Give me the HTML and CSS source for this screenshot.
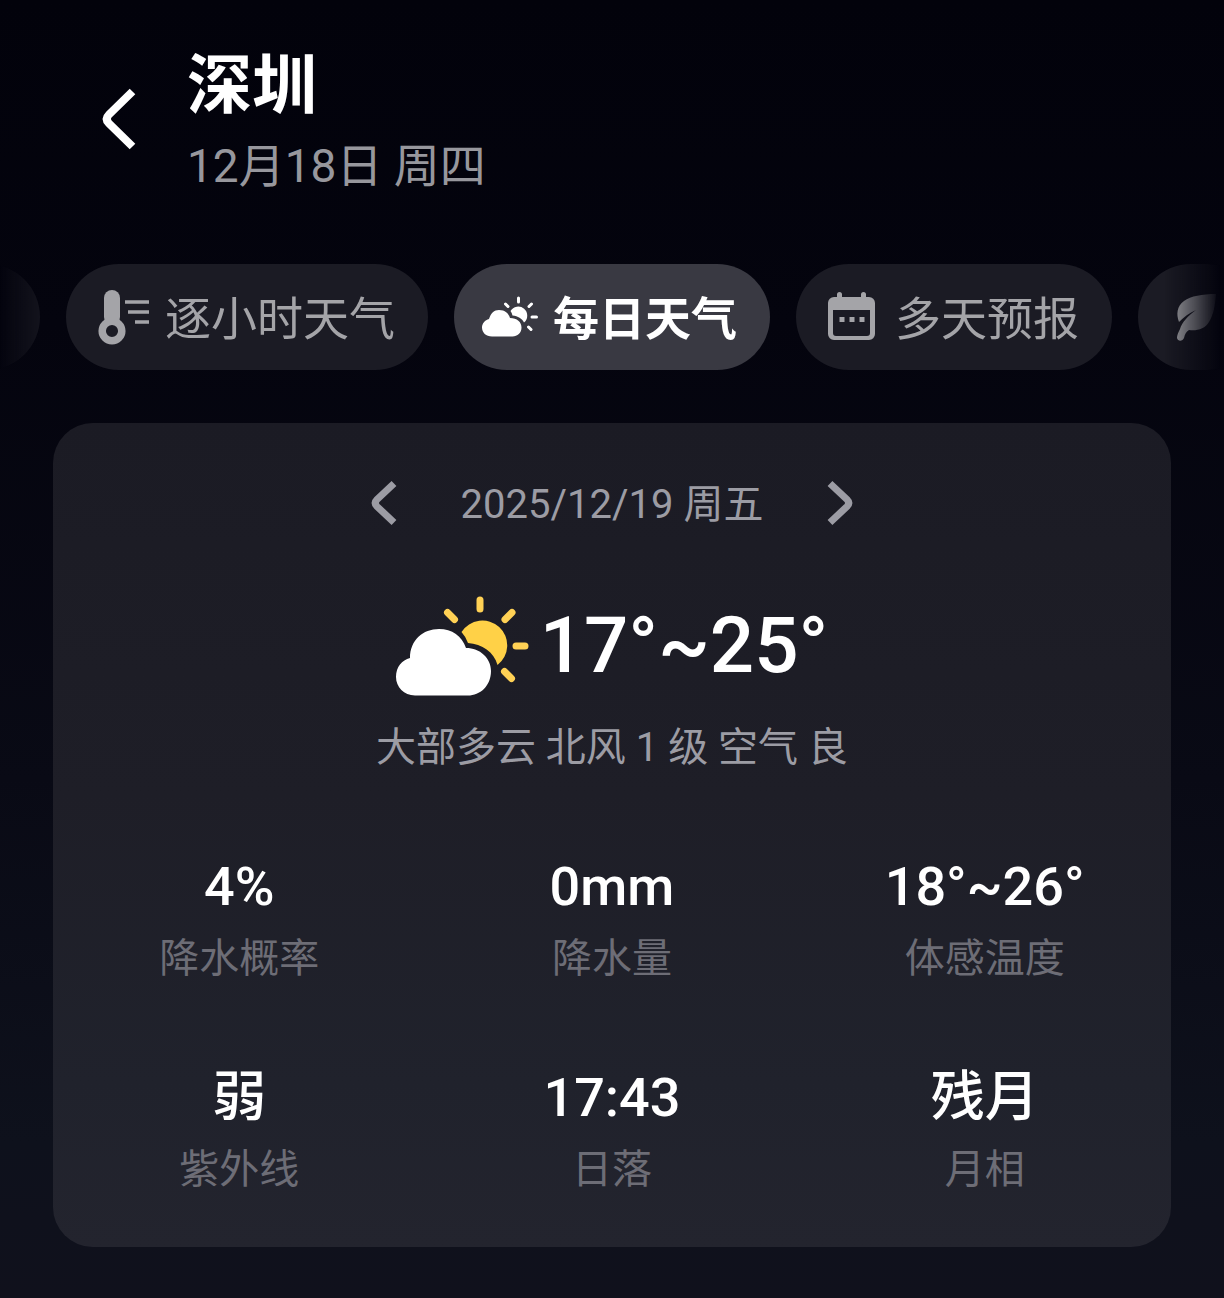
FILE: index.html
```html
<!DOCTYPE html>
<html lang="zh-CN">

<head>
    <meta charset="UTF-8">
    <meta name="viewport" content="width=device-width, initial-scale=1.0">
    <title>深圳 每日天气</title>
    <link rel="stylesheet" href="styles.css">
</head>

<body>
    <!-- Header -->
    <header class="header">
        <button class="back" type="button" aria-label="返回">
            <svg width="34" height="62" viewBox="0 0 34 62"><path class="chevron" d="M30.500 3.500 L7 26.500 Q2.500 31 7 35.500 L30.500 58.500" stroke-width="8"/></svg>
        </button>
        <div>
            <h1 class="city">深圳</h1>
            <p class="today">12月18日 周四</p>
        </div>
    </header>

    <!-- Tabs -->
    <nav class="tabs">
        <button class="tab tab-first" type="button" aria-label="上一项"></button>
        <button class="tab" type="button">
            <svg class="tab-icon" viewBox="0 0 64 64">
                <path stroke="currentColor" stroke-width="16" stroke-linecap="round" d="M21 13v19"/>
                <circle stroke="currentColor" stroke-width="7.500" cx="21" cy="46" r="9.800"/>
                <path stroke="currentColor" stroke-width="3.500" d="M34 17h24M37 27h21M44 37h14"/>
            </svg>
            逐小时天气
        </button>
        <button class="tab active" type="button">
            <svg class="tab-icon" viewBox="0 0 64 64">
                <path fill="currentColor" d="M13 51.500C7 51.500 3 47.500 3 42.500c0-4 3-7.500 7-8.500C12 28 15 25 20 25c6 0 9.500 3 11 8 7 0 11.500 4 11.500 9.500s-4 9-9 9z"/>
                <path fill="currentColor" d="M31.500 26A9 9 0 1 1 45 37.500C43 33.500 39 31 33.500 30.500Q33 28 31.500 26z"/>
                <path stroke="currentColor" stroke-width="3" stroke-linecap="round" d="M39.500 13v4M26.500 19l2.500 2.500M52.500 19l-2.500 2.500M53 32h4.500M49.500 42l2.500 2.500"/>
            </svg>
            每日天气
        </button>
        <button class="tab" type="button">
            <svg class="tab-icon" viewBox="0 0 64 64">
                <path fill="currentColor" fill-rule="evenodd" d="M16 9.500a2.500 2.500 0 0 1 5 0V12h19V9.500a2.500 2.500 0 0 1 5 0V12h3a6 6 0 0 1 6 6v31a6 6 0 0 1-6 6H13a6 6 0 0 1-6-6V18a6 6 0 0 1 6-6h3zM12 25v23a3 3 0 0 0 3 3h31a3 3 0 0 0 3-3V25z"/>
                <path stroke="currentColor" stroke-width="5" d="M18.500 34.500h5M28.500 34.500h5M38.500 34.500h5"/>
            </svg>
            多天预报
        </button>
        <button class="tab" type="button" aria-label="空气质量">
            <svg class="tab-icon" viewBox="0 0 64 64">
                <path fill="currentColor" d="M53 9C39 9 28 11 21 16c-7 5-8 13-5 21 5-5 10-9 17-12-8 6-14 12-16 19-2 4-3 6-3 9 1 4 6 3 7 0 1-4 2-6 5-8 8 1 16-1 20-8 5-8 6-17 7-28z"/>
            </svg>
        </button>
    </nav>

    <!-- Daily weather card -->
    <main class="card">
        <div class="date-nav">
            <button type="button" aria-label="前一天">
                <svg width="26" height="46" viewBox="0 0 26 46"><path class="chevron" d="M23 3.500 L6 19.500 Q2.500 23 6 26.500 L23 42.500" stroke-width="7"/></svg>
            </button>
            <span class="date">2025/12/19 周五</span>
            <button type="button" aria-label="后一天">
                <svg width="26" height="46" viewBox="0 0 26 46"><path class="chevron" d="M3 3.500 L20 19.500 Q23.500 23 20 26.500 L3 42.500" stroke-width="7"/></svg>
            </button>
        </div>

        <div class="summary">
            <svg class="weather-icon" width="134" height="100" viewBox="0 0 134 100">
                <path class="sun" d="M65.500 36A24.800 24.800 0 1 1 101.500 69C98 56 86 48 72 47Q70 41 65.500 36z"/>
                <path class="rays" d="M84 4v9M51.500 16.500l7 7M116 16.500l-7 7M120 50h9M108.500 75.500l7 7"/>
                <path class="cloud" d="M19 99.500C8 99.500 0 91 0 81c0-10 6-17 14-19C14 44 27 33 43 33c13 0 23 7 27 19 14 0 25 10 25 23 0 15-11 24.500-23 24.500z"/>
            </svg>
            <span class="temp">17°~25°</span>
        </div>
        <p class="condition">大部多云 北风 1 级 空气 良</p>

        <dl class="stats">
            <div class="stat">
                <dt>降水概率</dt>
                <dd>4%</dd>
            </div>
            <div class="stat">
                <dt>降水量</dt>
                <dd>0mm</dd>
            </div>
            <div class="stat">
                <dt>体感温度</dt>
                <dd>18°~26°</dd>
            </div>
            <div class="stat">
                <dt>紫外线</dt>
                <dd>弱</dd>
            </div>
            <div class="stat">
                <dt>日落</dt>
                <dd>17:43</dd>
            </div>
            <div class="stat">
                <dt>月相</dt>
                <dd>残月</dd>
            </div>
        </dl>
    </main>
</body>

</html>
```

FILE: styles.css
```css
* {
    box-sizing: border-box;
}

body {
    margin: 0;
    min-height: 100vh;
    padding-top: 46px;
    background: linear-gradient(#02020b 0%, #04040e 25%, #090a15 60%, #0e111c 88%, #10111c 100%);
    color: #fff;
    font-family: Roboto, "Noto Sans CJK SC", sans-serif;
    overflow-x: hidden;
}

h1, p, dl, dd {
    margin: 0;
}

button {
    padding: 0;
    border: none;
    background: none;
    color: inherit;
    font-family: inherit;
    cursor: pointer;
}

svg {
    display: block;
    fill: none;
}

.chevron {
    stroke: currentColor;
}

/* Header */
.header {
    display: flex;
    align-items: center;
    gap: 51px;
    padding: 0 102px;
}

.back {
    margin-bottom: 4px;
}

.city {
    font-size: 65px;
    font-weight: 700;
    line-height: 80px;
}

.today {
    margin-top: 12px;
    padding-bottom: 2px;
    color: #97979d;
    font-size: 46px;
    line-height: 56px;
}

/* Tabs */
.tabs {
    display: flex;
    gap: 26px;
    margin-top: 68px;
    overflow: hidden;
    -webkit-mask-image: linear-gradient(to right, transparent, #000 60px, #000 calc(100% - 60px), transparent calc(100% - 4px));
    mask-image: linear-gradient(to right, transparent, #000 60px, #000 calc(100% - 60px), transparent calc(100% - 4px));
}

.tab {
    display: flex;
    flex: none;
    align-items: center;
    gap: 10px;
    height: 106px;
    padding: 0 33px 4px 25px;
    border-radius: 53px;
    background: #1b1b24;
    color: #a4a4a8;
    font-size: 46px;
    white-space: nowrap;
}

.tab-first {
    width: 106px;
    margin-left: -66px;
}

.tab.active {
    background: #393942;
    color: #fff;
    font-weight: 700;
}

.tab-icon {
    width: 64px;
    height: 64px;
    margin-top: 4px;
}

/* Card */
.card {
    margin: 53px 53px 51px;
    padding: 48px 0 49px;
    border-radius: 40px;
    background: linear-gradient(#1b1b24, #1e1e27 45%, #20222c 80%, #23242e);
    text-align: center;
}

.date-nav {
    display: flex;
    justify-content: center;
    align-items: center;
    gap: 62px;
    color: #9c9ca4;
    font-size: 40px;
    line-height: 60px;
}

.date {
    padding: 4px 2px 0;
}

.summary {
    display: flex;
    justify-content: center;
    align-items: center;
    gap: 10px;
    margin-top: 61px;
}

.sun {
    fill: #ffd147;
}

.rays {
    stroke: #ffd155;
    stroke-width: 7;
    stroke-linecap: round;
}

.cloud {
    fill: #fff;
}

.temp {
    font-size: 78px;
    font-weight: 500;
    line-height: 100px;
}

.condition {
    margin-top: 24px;
    color: #9c9ca4;
    font-size: 40px;
    line-height: 56px;
}

.stats {
    display: grid;
    grid-template-columns: repeat(3, 1fr);
    row-gap: 79px;
    margin-top: 79px;
}

.stat {
    display: flex;
    flex-direction: column-reverse;
    gap: 12px;
}

.stat dt {
    color: #6d6d76;
    font-size: 40px;
    line-height: 56px;
}

.stat dd {
    font-size: 54px;
    font-weight: 500;
    line-height: 64px;
}
```
